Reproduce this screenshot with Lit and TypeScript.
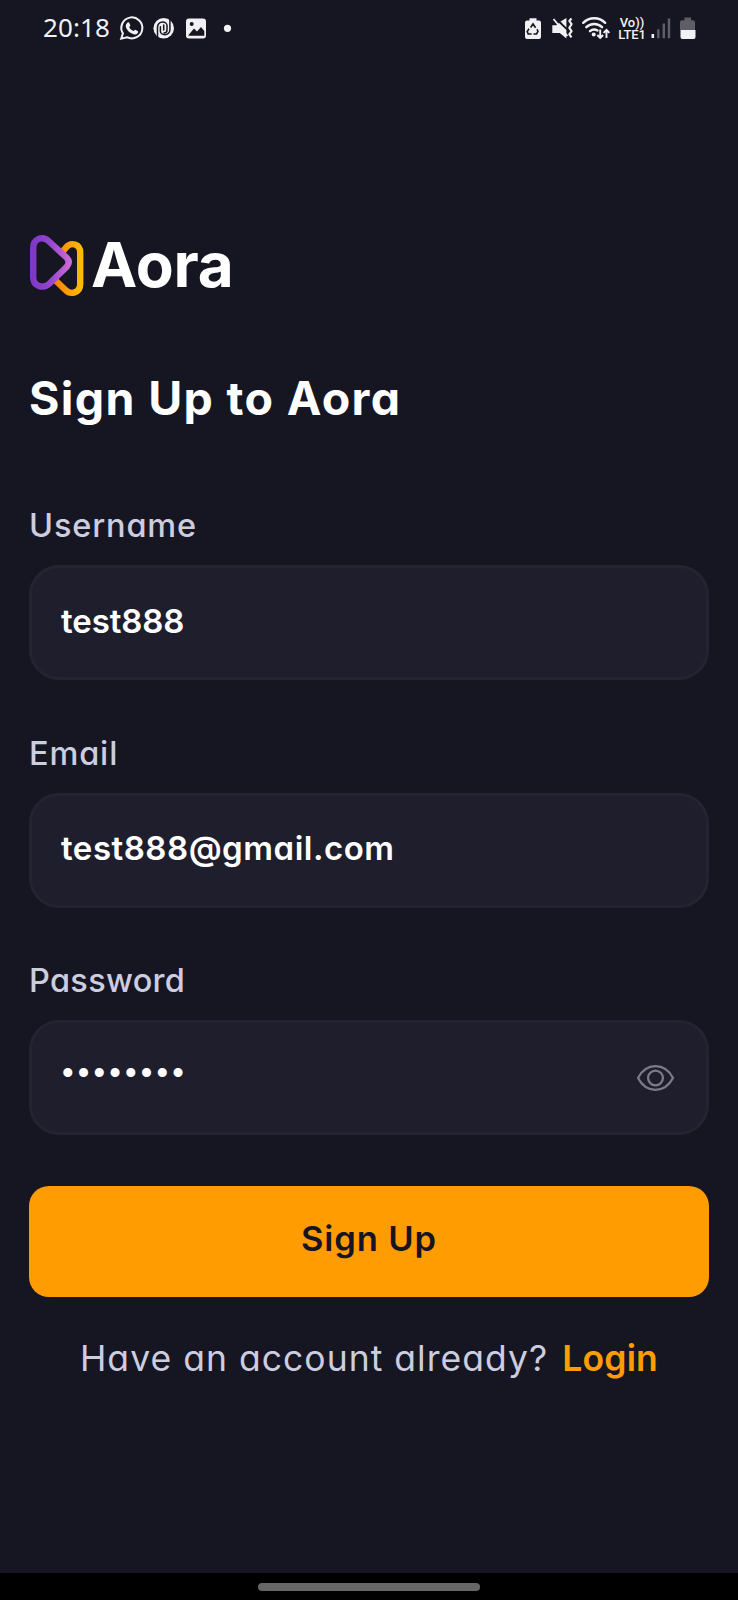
import { LitElement, html, css } from "lit";
import { customElement, property } from "lit/decorators.js";

@customElement("status-bar")
class StatusBar extends LitElement {
  static styles = css`
    :host {
      display: flex;
      justify-content: space-between;
      height: 57px;
      padding: 0 41px 0 43px;
      box-sizing: border-box;
      color: #f1f1f4;
      font-family: "Noto Sans", sans-serif;
    }
    .group { display: flex; height: 57px; align-items: center; }
    .time { font-size: 26px; line-height: 57px; width: 76px; letter-spacing: 0.1px; margin-top: -2px; }
    svg { display: block; flex: none; overflow: visible; }
    .volte {
      font: 500 13px/12px Roboto, sans-serif;
      text-align: center;
      width: 32px;
      margin-right: 2px;
      margin-left: -1px;
    }
    .volte div { white-space: nowrap; }
    .lte { letter-spacing: -0.1px; }
  `;
  render() {
    return html`
      <div class="group">
        <div class="time">20:18</div>
        <svg width="120" height="57" viewBox="119 0 120 57">
          <path d="M121.200 38.700l1.700-5.300a10.500 10.500 0 1 1 4.100 3.800z" fill="none" stroke="#f1f1f4" stroke-width="2"/>
          <path d="M127.200 22.700c.8-.8 1.700-.7 2.100.2l1 2.400c.2.5-1 1.500-1 2 .8 1.700 2.300 3 4 3.800.6.100 1.400-1.500 2-1.300l2.400 1.200c.7.400.4 1.600-.1 2.200-1.300 1.400-3.200 1.500-5.200.6-2.900-1.200-5-3.300-6.200-5.800-.8-1.900-.4-3.900 1-5.300z" fill="#f1f1f4"/>
          <circle cx="163.700" cy="28.300" r="10.300" fill="#f1f1f4"/>
          <g fill="none" stroke="#171622" stroke-width="1.500" stroke-linecap="round">
            <path d="M157.500 36.500V27a5 5 0 0 1 5-5c2.500 0 4.500 1.500 4.500 3.500v4.500a3 3 0 0 1-3 3"/>
            <path d="M169.900 20V29.700a5 5 0 0 1-5 5c-2.500 0-4.500-1.500-4.500-3.500v-4.500"/>
            <path d="M163.700 25v5"/>
          </g>
          <rect x="186" y="18.500" width="20" height="20" rx="3" fill="#f1f1f4"/>
          <path d="M188.500 35l5.500-6.500 3 3 4-4.500 3.300 4v4.700h-15.800z" fill="#171622"/>
          <circle cx="191.700" cy="24" r="2" fill="#171622"/>
          <circle cx="227.500" cy="28.300" r="3.600" fill="#f1f1f4"/>
        </svg>
      </div>
      <div class="group">
        <svg width="92" height="57" viewBox="525 0 92 57">
          <path d="M529.500 18.200h7v2.300h2.500a2 2 0 0 1 2 2V37a2 2 0 0 1-2 2h-12a2 2 0 0 1-2-2V22.500a2 2 0 0 1 2-2h2.500z" fill="#f1f1f4"/>
          <path d="M530.600 27.500l2.400-3.500 2.600 3.800M537 29.200l1 2.300-1.500 2.500h-3M531.700 34h-3.500l-1-2.500 1.800-2.800" fill="none" stroke="#171622" stroke-width="1.600"/>
          <path d="M552.300 25.200h4l2.800-2.300 7.300 7v8.600l-6.600-5.600h-7.500zM560.500 21.500l5.900-3.400v9.500z" fill="#f1f1f4"/>
          <path d="M553.500 19l14 17" stroke="#f1f1f4" stroke-width="1.800"/>
          <path d="M571.500 18.500l-2.200 2.500 2.300 3.200-2.300 3.600 2.300 3.300-2.300 3.200 2.200 3" fill="none" stroke="#f1f1f4" stroke-width="2.100" stroke-linejoin="round"/>
          <path d="M583.200 22.800a15.500 15.500 0 0 1 22 0M586.300 27.200a11.300 11.300 0 0 1 15.800 0M590 31.200a6.500 6.500 0 0 1 7.500-.7" fill="none" stroke="#f1f1f4" stroke-width="2.400" stroke-linecap="round"/>
          <circle cx="593.700" cy="34.500" r="2" fill="#f1f1f4"/>
          <path d="M600.200 29.500v8M597.300 35l2.900 3 2.900-3M606.500 38v-8M603.600 32.800l2.900-3 2.900 3" fill="none" stroke="#f1f1f4" stroke-width="1.900"/>
        </svg>
        <div class="volte"><div>Vo))</div><div class="lte">LTE1</div></div>
        <svg width="47" height="57" viewBox="650 0 47 57">
          <rect x="651.500" y="34" width="2.600" height="4" fill="#f1f1f4"/>
          <path d="M658.300 29.300v9M663.800 23.500v14.800M669 18.500v19.800" stroke="#5f5e68" stroke-width="2.400"/>
          <path d="M684.500 17.500h6.500v2.700h2a2 2 0 0 1 2 2V30h-15v-7.800a2 2 0 0 1 2-2h2.500z" fill="#5f5e68"/>
          <path d="M680.500 30h15v7a2 2 0 0 1-2 2h-11a2 2 0 0 1-2-2z" fill="#f1f1f4"/>
        </svg>
      </div>
    `;
  }
}

@customElement("form-field")
class FormField extends LitElement {
  @property() label = "";
  @property() value = "";
  @property() kind = "text";
  static styles = css`
    :host { display: flex; flex-direction: column; gap: 20px; }
    .label {
      font-size: 32.5px;
      line-height: 42px;
      height: 40px;
      font-weight: 450;
      color: #cdcde0;
      letter-spacing: 0.85px;
    }
    .label-password { letter-spacing: 0.3px; }
    .box {
      display: flex;
      align-items: center;
      justify-content: space-between;
      height: 115px;
      box-sizing: border-box;
      padding: 0 31px 4px 29px;
      border: 3px solid #232431;
      border-radius: 30px;
      background: #1f1e2c;
      color: #fff;
    }
    .value { font-size: 33px; line-height: 40px; font-weight: 620; white-space: nowrap; letter-spacing: -0.1px; }
    .email { letter-spacing: 0.52px; }
    .password { font: 33px/40px "Liberation Sans", sans-serif; letter-spacing: 4.2px; padding: 0 0 5px 1px; }
    svg { display: block; margin-top: 4px; }
  `;
  render() {
    return html`
      <div class="label label-${this.kind}">${this.label}</div>
      <div class="box">
        <div class="value ${this.kind}">${this.value}</div>
        ${this.kind === "password"
          ? html`<svg width="39" height="28" viewBox="0 0 39 28" fill="none" stroke="#7b7b8b" stroke-width="2.300" stroke-linejoin="round">
              <path d="M2 14C6 6.500 12 2.200 19.500 2.200S33 6.500 37 14C33 21.500 27 25.800 19.500 25.800S6 21.500 2 14z"/>
              <circle cx="19.500" cy="14" r="7.400"/>
            </svg>`
          : null}
      </div>
    `;
  }
}

@customElement("app-root")
class AppRoot extends LitElement {
  static styles = css`
    :host {
      display: flex;
      flex-direction: column;
      height: 1600px;
      background: #161622;
      font-family: Inter, sans-serif;
      font-feature-settings: "cv11";
    }
    .main { flex: 1; padding: 176px 29px 0; display: flex; flex-direction: column; }
    .logo { display: flex; align-items: flex-start; height: 66px; gap: 6px; }
    .mark { display: block; }
    .brand {
      font-size: 62px;
      line-height: 64px;
      font-weight: 700;
      color: #fff;
      letter-spacing: -0.2px;
      font-feature-settings: normal;
    }
    .title {
      margin: 69px 0 77px;
      font-size: 46.5px;
      line-height: 60px;
      font-weight: 700;
      color: #fff;
      letter-spacing: 1.35px;
      white-space: nowrap;
    }
    .fields { display: flex; flex-direction: column; gap: 52.5px; }
    .submit {
      display: flex;
      align-items: center;
      justify-content: center;
      margin-top: 50.5px;
      height: 111px;
      padding: 0 0 5px;
      border: 0;
      border-radius: 20px;
      background: #ff9c01;
      color: #161622;
      font: 600 34.5px Inter, sans-serif;
      font-feature-settings: "cv11";
      letter-spacing: 0.9px;
    }
    .prompt {
      display: flex;
      justify-content: center;
      gap: 14px;
      margin-top: 36px;
      font-size: 35.5px;
      line-height: 51px;
      color: #cdcde0;
      letter-spacing: 1.03px;
      white-space: nowrap;
    }
    .login { color: #ff9c01; font-weight: 620; letter-spacing: 0.2px; }
    .nav { height: 27px; background: #000; display: flex; justify-content: center; padding-top: 10px; box-sizing: border-box; }
    .pill { width: 222px; height: 8px; border-radius: 4px; background: #666; }
  `;
  render() {
    return html`
      <status-bar></status-bar>
      <div class="main">
        <div class="logo">
          <svg class="mark" width="56" height="66" viewBox="29 233 56 66" fill="none" stroke-width="6.400" stroke-linejoin="round">
            <defs>
              <linearGradient id="p" x1="0" x2="1"><stop offset="0" stop-color="#7f38c6"/><stop offset=".45" stop-color="#9345cd"/><stop offset="1" stop-color="#c869d6"/></linearGradient>
              <linearGradient id="o" x1="0" x2="1"><stop offset="0" stop-color="#ff8008"/><stop offset="1" stop-color="#ffb906"/></linearGradient>
            </defs>
            <path d="M61.500 253L66 247.500C71 241.500 80.200 244 80.200 252.500V284C80.200 292.500 71 295.500 65.500 290L54.500 279.500" stroke="url(#o)"/>
            <path d="M33.200 248C33.200 238.500 42.500 235.500 48.500 241L66.500 257.500Q71 262 66.500 267L49.500 283.500C43 289.500 33.200 286 33.200 277.500z" stroke="url(#p)"/>
          </svg>
          <div class="brand">Aora</div>
        </div>
        <div class="title">Sign Up to Aora</div>
        <div class="fields">
          <form-field label="Username" value="test888"></form-field>
          <form-field label="Email" value="test888@gmail.com" kind="email"></form-field>
          <form-field label="Password" value="••••••••" kind="password"></form-field>
        </div>
        <button class="submit">Sign Up</button>
        <div class="prompt"><span>Have an account already?</span><span class="login">Login</span></div>
      </div>
      <div class="nav"><div class="pill"></div></div>
    `;
  }
}
